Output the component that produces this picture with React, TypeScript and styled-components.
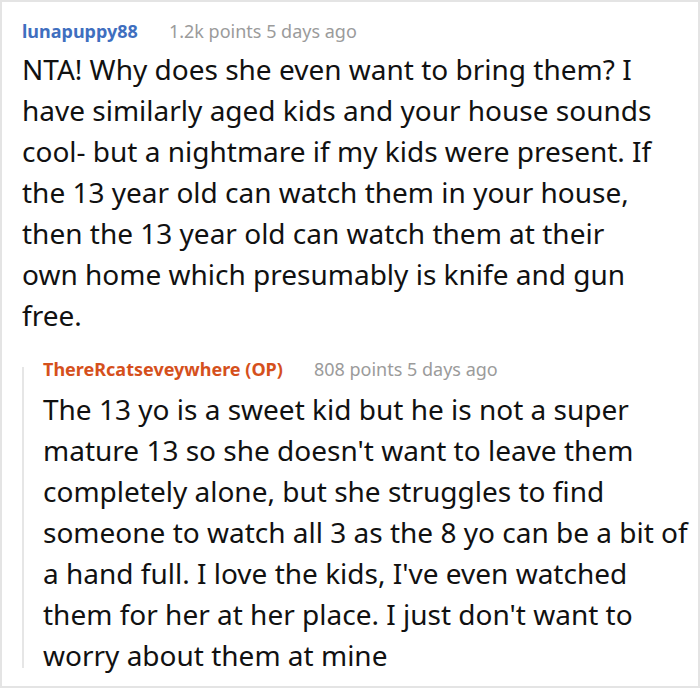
import styled, { createGlobalStyle } from 'styled-components';

const GlobalStyle = createGlobalStyle`
  html, body {
    margin: 0;
    padding: 0;
    background: #ffffff;
  }
  body {
    font-family: "Noto Sans", "Open Sans", sans-serif;
  }
`;

const Frame = styled.div`
  box-sizing: border-box;
  width: 700px;
  height: 688px;
  border: 2px solid #e4e4e4;
  background: #fff;
  padding: 16px 8px 0 20px;
  overflow: hidden;
`;

const Comment = styled.div`
  display: flex;
  flex-direction: column;
`;

const Reply = styled.div`
  margin-top: 31px;
  border-left: 2px solid #e6e6e6;
  padding-left: 19px;
`;

const Header = styled.div<{ nested?: boolean }>`
  display: flex;
  align-items: baseline;
  gap: 31px;
  font-size: 18px;
  line-height: 26px;
  margin-top: ${({ nested }) => (nested ? '-11px' : '0')};
  margin-bottom: ${({ nested }) => (nested ? '7px' : '5px')};
`;

const Author = styled.span<{ op?: boolean }>`
  font-weight: 700;
  color: ${({ op }) => (op ? '#d5501c' : '#3f6fbf')};
`;

const Meta = styled.span`
  color: #9b9b9b;
`;

const Body = styled.p<{ nested?: boolean }>`
  margin: 0 0 ${({ nested }) => (nested ? '-8px' : '0')};
  padding-right: ${({ nested }) => (nested ? '0' : '28px')};
  font-size: 28px;
  line-height: 41px;
  color: #111;
`;

type CommentData = {
  author: string;
  op?: boolean;
  meta: string;
  text: string;
};

const parent: CommentData = {
  author: 'lunapuppy88',
  meta: '1.2k points 5 days ago',
  text:
    'NTA! Why does she even want to bring them? I have similarly aged kids and your house sounds cool- but a nightmare if my kids were present. If the 13 year old can watch them in your house, then the 13 year old can watch them at their own home which presumably is knife and gun free.',
};

const child: CommentData = {
  author: 'ThereRcatseveywhere (OP)',
  op: true,
  meta: '808 points 5 days ago',
  text:
    "The 13 yo is a sweet kid but he is not a super mature 13 so she doesn't want to leave them completely alone, but she struggles to find someone to watch all 3 as the 8 yo can be a bit of a hand full. I love the kids, I've even watched them for her at her place. I just don't want to worry about them at mine",
};

const CommentHead = ({ data, nested }: { data: CommentData; nested?: boolean }) => (
  <Header nested={nested}>
    <Author op={data.op}>{data.author}</Author>
    <Meta>{data.meta}</Meta>
  </Header>
);

export default function App() {
  return (
    <>
      <GlobalStyle />
      <Frame>
        <Comment>
          <CommentHead data={parent} />
          <Body>{parent.text}</Body>
          <Reply>
            <CommentHead data={child} nested />
            <Body nested>{child.text}</Body>
          </Reply>
        </Comment>
      </Frame>
    </>
  );
}
